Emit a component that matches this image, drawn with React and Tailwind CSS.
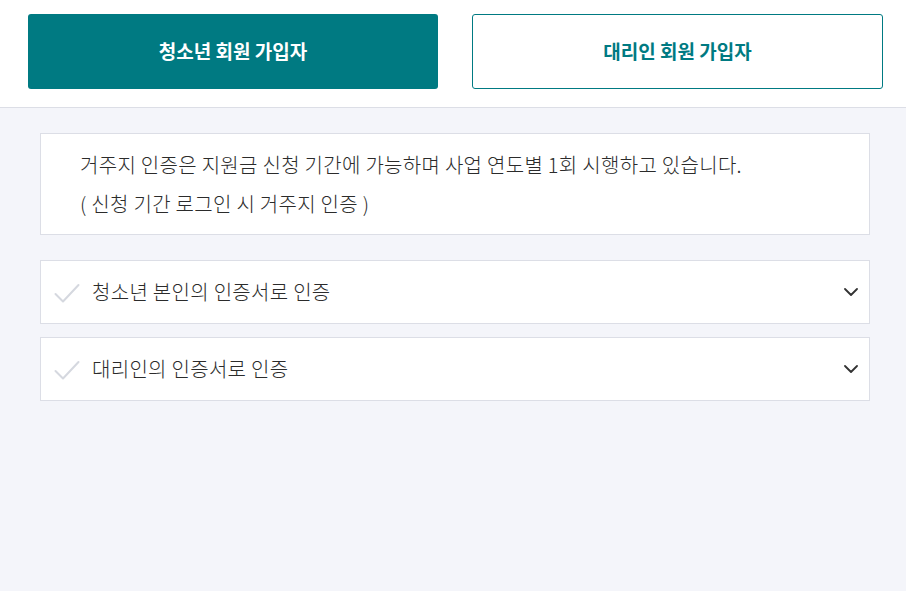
const items = ["청소년 본인의 인증서로 인증", "대리인의 인증서로 인증"];

export default function App() {
  return (
    <div className="min-h-[591px] bg-[#f4f5fa] text-[#333] font-['Noto_Sans_CJK_KR','Noto_Sans',sans-serif]">
      <div className="flex gap-[34px] border-b border-[#dcdee6] bg-white pl-[28px] pt-[14px] pb-[18px]">
        <button className="flex h-[75px] w-[410px] shrink-0 items-center justify-center rounded-[3px] bg-[#007a82] text-[19px] font-bold text-white">
          청소년 회원 가입자
        </button>
        <button className="flex h-[75px] w-[411px] shrink-0 items-center justify-center rounded-[3px] border border-[#007a82] bg-white text-[19px] font-bold text-[#007a82]">
          대리인 회원 가입자
        </button>
      </div>

      <div className="pl-[40px] pr-[36px] pt-[25px]">
        <div className="border border-[#dcdee6] bg-white py-[11px] pl-[39px] text-[20px] font-light leading-[39px] tracking-[0.3px] text-[#2b2b2b]">
          <p>거주지 인증은 지원금 신청 기간에 가능하며 사업 연도별 1회 시행하고 있습니다.</p>
          <p>( 신청 기간 로그인 시 거주지 인증 )</p>
        </div>

        <div className="mt-[25px] flex flex-col gap-[13px]">
          {items.map((label) => (
            <div
              key={label}
              className="flex h-[64px] items-center border border-[#dcdee6] bg-white pl-[13px] pr-[11px]"
            >
              <svg width="26" height="22" viewBox="0 0 26 22" fill="none" className="mr-[12px] mt-[4px]">
                <path d="M1.5 11 L9 18.5 L24.5 2" stroke="#d5d8df" strokeWidth="2" strokeLinecap="round" strokeLinejoin="round" />
              </svg>
              <span className="flex-1 text-[20px] font-light tracking-[0.3px] text-[#2b2b2b]">{label}</span>
              <svg width="14" height="8" viewBox="0 0 14 8" fill="none">
                <path d="M1 1 L7 7 L13 1" stroke="#333" strokeWidth="1.8" strokeLinecap="round" strokeLinejoin="round" />
              </svg>
            </div>
          ))}
        </div>
      </div>
    </div>
  );
}
